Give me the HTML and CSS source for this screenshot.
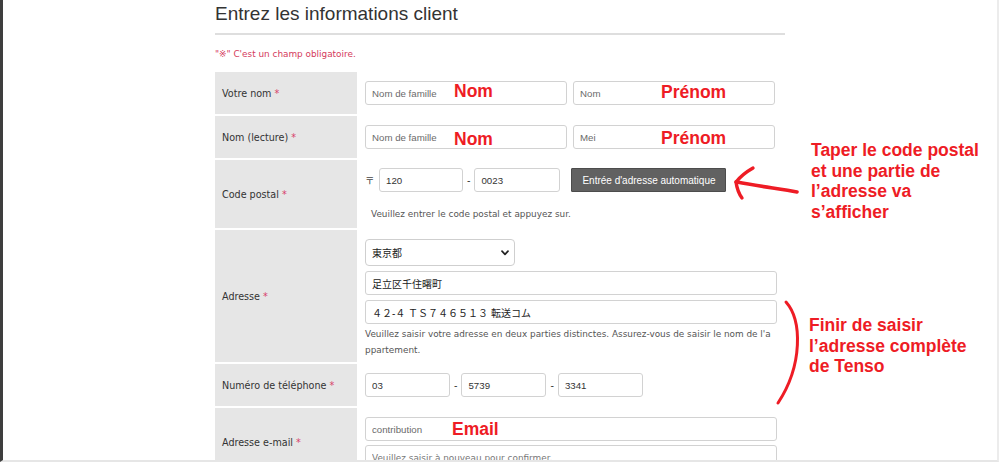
FILE: index.html
```html
<!DOCTYPE html>
<html lang="fr">
<head>
<meta charset="utf-8">
<title>Entrez les informations client</title>
<link rel="stylesheet" href="styles.css">
</head>
<body>
<div class="frame">
  <main class="main">
    <h2 class="title">Entrez les informations client</h2>
    <p class="note">"※" C'est un champ obligatoire.</p>
    <div class="form">
      <div class="row">
        <div class="label"><span>Votre nom</span><span class="req">*</span></div>
        <div class="value pair">
          <input class="field half" placeholder="Nom de famille">
          <input class="field half" placeholder="Nom">
        </div>
      </div>
      <div class="row">
        <div class="label"><span>Nom (lecture)</span><span class="req">*</span></div>
        <div class="value pair">
          <input class="field half" placeholder="Nom de famille">
          <input class="field half" placeholder="Mei">
        </div>
      </div>
      <div class="row">
        <div class="label"><span>Code postal</span><span class="req">*</span></div>
        <div class="value postal-cell">
          <div class="line">
            <span class="zip-mark">〒</span>
            <input class="field zip1" value="120">
            <span class="dash">-</span>
            <input class="field zip2" value="0023">
            <button class="auto-btn" type="button">Entrée d'adresse automatique</button>
          </div>
          <p class="help help-zip">Veuillez entrer le code postal et appuyez sur.</p>
        </div>
      </div>
      <div class="row">
        <div class="label"><span>Adresse</span><span class="req">*</span></div>
        <div class="value stack addr">
          <div class="select">
            <span>東京都</span>
            <svg class="chev" width="8" height="6" viewBox="0 0 8 6"><path d="M1 1.2 L4 4.4 L7 1.2" fill="none" stroke="#222" stroke-width="1.7" stroke-linecap="round" stroke-linejoin="round"/></svg>
          </div>
          <input class="field full cjk" value="足立区千住曙町">
          <input class="field full cjk" value="４２-４ ＴＳ７４６５１３ 転送コム">
          <p class="help help-addr"><span>Veuillez saisir votre adresse en deux parties distinctes. Assurez-vous de saisir le nom de l'a</span><span>ppartement.</span></p>
        </div>
      </div>
      <div class="row">
        <div class="label"><span>Numéro de téléphone</span><span class="req">*</span></div>
        <div class="value line">
          <input class="field tel" value="03">
          <span class="dash">-</span>
          <input class="field tel" value="5739">
          <span class="dash">-</span>
          <input class="field tel" value="3341">
        </div>
      </div>
      <div class="row">
        <div class="label"><span>Adresse e-mail</span><span class="req">*</span></div>
        <div class="value stack mail">
          <input class="field full" placeholder="contribution">
          <input class="field full confirm" placeholder="Veuillez saisir à nouveau pour confirmer.">
        </div>
      </div>
    </div>
  </main>
</div>

<div class="annotations">
  <span class="annot a-nom1">Nom</span>
  <span class="annot a-pre1">Prénom</span>
  <span class="annot a-nom2">Nom</span>
  <span class="annot a-pre2">Prénom</span>
  <span class="annot a-mail">Email</span>
  <p class="annot block a-taper">Taper le code postal<br>et une partie de<br>l’adresse va<br>s’afficher</p>
  <p class="annot block a-finir">Finir de saisir<br>l’adresse complète<br>de Tenso</p>
  <svg class="marks" width="1000" height="462" viewBox="0 0 1000 462">
    <g fill="none" stroke="#ee1c25" stroke-linecap="round" stroke-linejoin="round">
      <path d="M797 192 C781 189 757 186 737 182" stroke-width="3.6"/>
      <path d="M753 168 C746 172 740 177 736 182" stroke-width="3.4"/>
      <path d="M736 182 C737 189 739 194 742 198" stroke-width="3.4"/>
      <path d="M786 302 C802 320 803 365 778 403" stroke-width="3"/>
    </g>
  </svg>
</div>
</body>
</html>
```
FILE: styles.css
```css
* { box-sizing: border-box; }
html, body { margin: 0; padding: 0; }
body {
  position: relative;
  width: 1000px;
  height: 462px;
  overflow: hidden;
  background: #fff;
  font-family: "DejaVu Sans", Verdana, sans-serif;
  color: #333;
}
.frame {
  width: 999px;
  height: 462px;
  border-left: 3px solid #3e3e3e;
  border-right: 2px solid #ececec;
  border-bottom: 2px solid #e6e6e6;
  overflow: hidden;
}
.main {
  margin-left: 212px;
  width: 570px;
}
.title {
  margin: 0;
  padding-top: 2px;
  padding-bottom: 7px;
  border-bottom: 2px solid #dedede;
  font: 400 19px/24px "Liberation Sans", Arial, sans-serif;
  color: #333;
}
.note {
  margin: 12px 0 11px;
  font-size: 8.9px;
  line-height: 14px;
  color: #d43a5c;
}
.row {
  display: grid;
  grid-template-columns: 142px 428px;
  margin-bottom: 2px;
}
.label {
  background: #e6e6e6;
  display: flex;
  align-items: center;
  padding-left: 7px;
  font-size: 9.6px;
  color: #333;
  white-space: nowrap;
}
.req { color: #d8406a; margin-left: 3px; }
.value { padding: 9px 8px; }
.pair { display: flex; gap: 6px; }
.line { display: flex; align-items: center; }
.stack { display: flex; flex-direction: column; align-items: flex-start; gap: 5px; }
.stack.addr { padding-bottom: 4px; }
.stack.mail { gap: 4px; padding-bottom: 8px; }
.field {
  height: 24px;
  margin: 0;
  padding: 0 6px;
  border: 1px solid #d2d2d2;
  border-radius: 3px;
  background: #fff;
  font: 400 9.7px "Liberation Sans", Arial, "Noto Sans CJK JP", sans-serif;
  color: #333;
  outline: none;
}
.field::placeholder { color: #6a6a6a; opacity: 1; }
.half { width: 202px; }
.full { width: 412px; }
.cjk { font-family: "Liberation Sans", "Noto Sans CJK JP", sans-serif; font-size: 10px; color: #222; }
.confirm::placeholder { font-family: "DejaVu Sans", Verdana, sans-serif; font-size: 8.9px; color: #777; }
.postal-cell { padding: 8px 8px 7px; }
.zip-mark {
  width: 9px;
  font: 400 9.5px "Noto Sans CJK JP", sans-serif;
  color: #444;
  margin-right: 5px;
}
.zip1 { width: 84px; }
.zip2 { width: 86px; }
.tel { width: 85px; }
.dash {
  margin: 0 4px;
  font-size: 9.6px;
  color: #333;
}
.auto-btn {
  margin-left: 11px;
  width: 155px;
  height: 24px;
  padding: 0;
  border: 1px solid #4c4c4c;
  border-radius: 1px;
  background: #616161;
  color: #fff;
  font: 400 10px "Liberation Sans", Arial, sans-serif;
}
.help {
  margin: 0;
  font-size: 8.9px;
  color: #555;
}
.help-zip { margin-top: 15px; line-height: 14px; padding-left: 6px; }
.help-addr { margin-top: -3px; line-height: 16px; }
.help-addr span { display: block; white-space: nowrap; }
.select {
  width: 150px;
  height: 27px;
  border: 1px solid #cfcfcf;
  border-radius: 4px;
  display: flex;
  align-items: center;
  justify-content: space-between;
  padding: 0 5px 0 6px;
  font: 400 10px "Noto Sans CJK JP", sans-serif;
  color: #222;
}
.chev { display: block; }

.annotations {
  position: absolute;
  left: 0;
  top: 0;
  width: 1000px;
  height: 462px;
  pointer-events: none;
}
.annot {
  position: absolute;
  margin: 0;
  font: 700 17.5px/20.5px "Liberation Sans", Arial, sans-serif;
  color: #ee1c25;
  white-space: nowrap;
}
.a-nom1 { left: 454px; top: 81px; }
.a-pre1 { left: 661px; top: 82px; }
.a-nom2 { left: 454px; top: 129px; }
.a-pre2 { left: 661px; top: 128px; }
.a-mail { left: 452px; top: 419px; }
.a-taper { left: 811px; top: 140px; }
.a-finir { left: 809px; top: 315px; }
.marks { position: absolute; left: 0; top: 0; }
```
